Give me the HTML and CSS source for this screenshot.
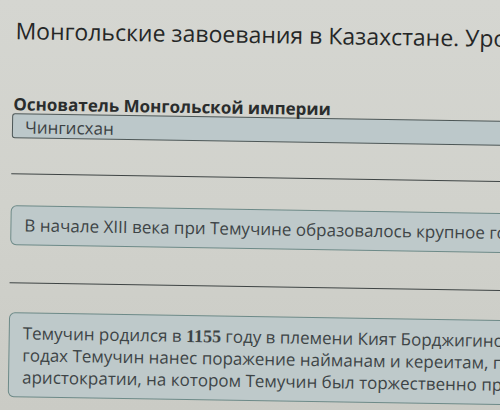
FILE: index.html
```html
<!DOCTYPE html>
<html lang="ru">
<head>
<meta charset="utf-8">
<link rel="stylesheet" href="styles.css">
</head>
<body>
<div class="page">
  <h1 class="title">Монгольские завоевания в Казахстане. Урок 1</h1>
  <div class="label">Основатель Монгольской империи</div>
  <div class="answer">Чингисхан</div>
  <div class="rule rule-1"></div>
  <div class="card card-short">В начале XIII века при Темучине образовалось крупное государство монголов</div>
  <div class="rule rule-2"></div>
  <div class="card card-long">Темучин родился в <span class="year">1155</span> году в племени Кият Борджигинов. В 1202–1204<br>годах Темучин нанес поражение найманам и кереитам, присоединив их земли. В 1206 году<br>аристократии, на котором Темучин был торжественно провозглашен великим ханом</div>
</div>
</body>
</html>
```

FILE: styles.css
```css
html, body {
  margin: 0;
  padding: 0;
  width: 500px;
  height: 410px;
  overflow: hidden;
}
body {
  background: linear-gradient(180deg, #d5d6d1 0%, #d1d2cc 50%, #cacbc5 100%);
  font-family: "Open Sans", "Noto Sans", sans-serif;
}
.page {
  width: 900px;
  padding: 15px 0 0 14px;
  transform: rotate(0.9deg);
  transform-origin: 0 0;
}
.title {
  margin: 0 0 0 2px;
  font-size: 23px;
  line-height: 30px;
  font-weight: 400;
  color: #252727;
  white-space: nowrap;
}
.label {
  margin: 50px 0 0 1px;
  font-size: 17px;
  line-height: 18px;
  font-weight: 700;
  color: #2a2d2d;
  white-space: nowrap;
}
.answer {
  margin-top: 0;
  height: 21px;
  padding: 2px 12px 0;
  border: 1px solid #4d5757;
  border-radius: 3px;
  background: #bcc8ca;
  font-size: 17px;
  line-height: 21px;
  color: #3b4143;
}
.rule {
  height: 1px;
  background: #3e4444;
}
.rule-1 { margin-top: 35px; }
.rule-2 { margin-top: 37px; }
.card {
  border: 1px solid #6d8a88;
  border-radius: 6px;
  background: #bec9ca;
  font-size: 17px;
  color: #3d4446;
  white-space: nowrap;
  padding-left: 13px;
}
.card-short {
  margin-top: 31px;
  padding-top: 7px;
  padding-bottom: 7px;
  line-height: 24px;
}
.card-long {
  margin-top: 29px;
  padding-top: 9px;
  padding-bottom: 8px;
  line-height: 22px;
}
.year {
  font-family: "Liberation Serif", "DejaVu Serif", serif;
  font-weight: 700;
  font-size: 18px;
}
```
